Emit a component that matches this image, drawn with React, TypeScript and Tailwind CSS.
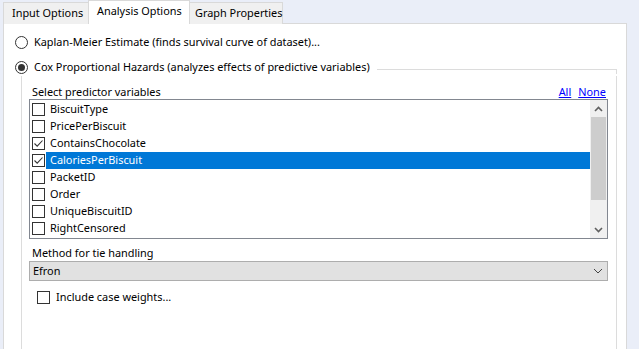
import { useState } from 'react';

const variables = [
  { name: 'BiscuitType', checked: false },
  { name: 'PricePerBiscuit', checked: false },
  { name: 'ContainsChocolate', checked: true },
  { name: 'CaloriesPerBiscuit', checked: true },
  { name: 'PacketID', checked: false },
  { name: 'Order', checked: false },
  { name: 'UniqueBiscuitID', checked: false },
  { name: 'RightCensored', checked: false },
];

function CheckBox({ checked }: { checked: boolean }) {
  return (
    <div className="w-[13px] h-[13px] shrink-0 border border-[#333333] bg-white flex items-center justify-center">
      {checked && (
        <svg width="11" height="11" viewBox="0 0 11 11">
          <path d="M1.5 5.5 L4.2 8.2 L9.5 2.5" fill="none" stroke="#333" strokeWidth="1.1" />
        </svg>
      )}
    </div>
  );
}

function Radio({ selected }: { selected: boolean }) {
  return (
    <div className="w-[13px] h-[13px] shrink-0 rounded-full border border-[#333333] bg-white flex items-center justify-center">
      {selected && <div className="w-[7px] h-[7px] rounded-full bg-[#333333]" />}
    </div>
  );
}

function Chevron({ up }: { up?: boolean }) {
  return (
    <svg width="9" height="6" viewBox="0 0 9 6">
      <path d={up ? 'M1 5 L4.5 1.5 L8 5' : 'M1 1 L4.5 4.5 L8 1'} fill="none" stroke="#606060" strokeWidth="1.6" />
    </svg>
  );
}

export default function App() {
  const [selectedRow, setSelectedRow] = useState(3);

  return (
    <div
      className="w-[639px] h-[349px] overflow-hidden bg-[#eaeef8] pl-[3px] flex flex-col text-[10.9px] text-black whitespace-nowrap"
      style={{ fontFamily: '"Noto Sans", "Open Sans", sans-serif' }}
    >
      {/* Tabs */}
      <div className="h-[26px] flex items-end relative z-10">
        <div className="h-[22px] w-[86px] border border-[#d9d9d9] border-b-0 bg-[#f0f0f0] flex items-center pl-[8px] leading-none">
          Input Options
        </div>
        <div className="h-[24px] w-[102px] -mx-[1px] border border-[#d9d9d9] border-b-0 bg-white flex items-center pb-[2px] pl-[8px] leading-none">
          Analysis Options
        </div>
        <div className="h-[22px] w-[94px] border border-[#d9d9d9] border-b-0 bg-[#f0f0f0] flex items-center pl-[5px] leading-none">
          Graph Properties
        </div>
      </div>

      {/* Panel */}
      <div className="w-[624px] flex-1 -mt-[1px] border border-[#d9d9d9] bg-white pl-[11px] pt-[11px]">
        <div className="h-[14px] flex items-center">
          <Radio selected={false} />
          <span className="ml-[6px] leading-none">Kaplan-Meier Estimate (finds survival curve of dataset)...</span>
        </div>

        <div className="mt-[11px] h-[14px] flex items-center">
          <Radio selected={true} />
          <span className="ml-[6px] leading-none">Cox Proportional Hazards (analyzes effects of predictive variables)</span>
          <div className="ml-[7px] mr-[9px] flex-1 self-stretch mt-[9px] border-t border-r border-[#dcdcdc]" />
        </div>

        {/* Group body */}
        <div className="ml-[6px] w-[596px] h-[300px] mt-[2px] border-l border-r border-[#dcdcdc] pl-[7px] pr-[8px]">
          <div className="h-[23px] flex items-end justify-between pl-[3px] pb-[1px] leading-none">
            <span>Select predictor variables</span>
            <div className="flex gap-[7px] pr-[2px]">
              <span className="text-[#0000ff] underline">All</span>
              <span className="text-[#0000ff] underline">None</span>
            </div>
          </div>

          {/* List box */}
          <div className="h-[140px] border border-[#828790] flex">
            <div className="flex-1 py-[1px]">
              {variables.map((v, i) => (
                <div key={v.name} className="h-[17px] flex items-center" onClick={() => setSelectedRow(i)}>
                  <div className="w-[16px] pl-[2px] flex items-center">
                    <CheckBox checked={v.checked} />
                  </div>
                  <div
                    className={`flex-1 h-full flex items-center pl-[4px] leading-none ${
                      i === selectedRow ? 'bg-[#0078d7] text-white' : ''
                    }`}
                  >
                    {v.name}
                  </div>
                </div>
              ))}
            </div>
            <div className="w-[17px] bg-[#f0f0f0] flex flex-col">
              <div className="h-[17px] flex items-center justify-center">
                <Chevron up />
              </div>
              <div className="h-[83px] mx-[1px] bg-[#cdcdcd]" />
              <div className="flex-1" />
              <div className="h-[17px] flex items-center justify-center">
                <Chevron />
              </div>
            </div>
          </div>

          <div className="h-[22px] flex items-end pl-[3px] pb-[2px] leading-none">Method for tie handling</div>

          <div className="h-[20px] border border-[#adadad] bg-[#e1e1e1] flex items-center justify-between pl-[3px] pr-[4px] leading-none">
            <span>Efron</span>
            <svg width="10" height="6" viewBox="0 0 10 6">
              <path d="M1 1 L5 5 L9 1" fill="none" stroke="#444" strokeWidth="1" />
            </svg>
          </div>

          <div className="mt-[10px] ml-[8px] h-[13px] flex items-center">
            <CheckBox checked={false} />
            <span className="ml-[6px] leading-none">Include case weights...</span>
          </div>
        </div>
      </div>
    </div>
  );
}
